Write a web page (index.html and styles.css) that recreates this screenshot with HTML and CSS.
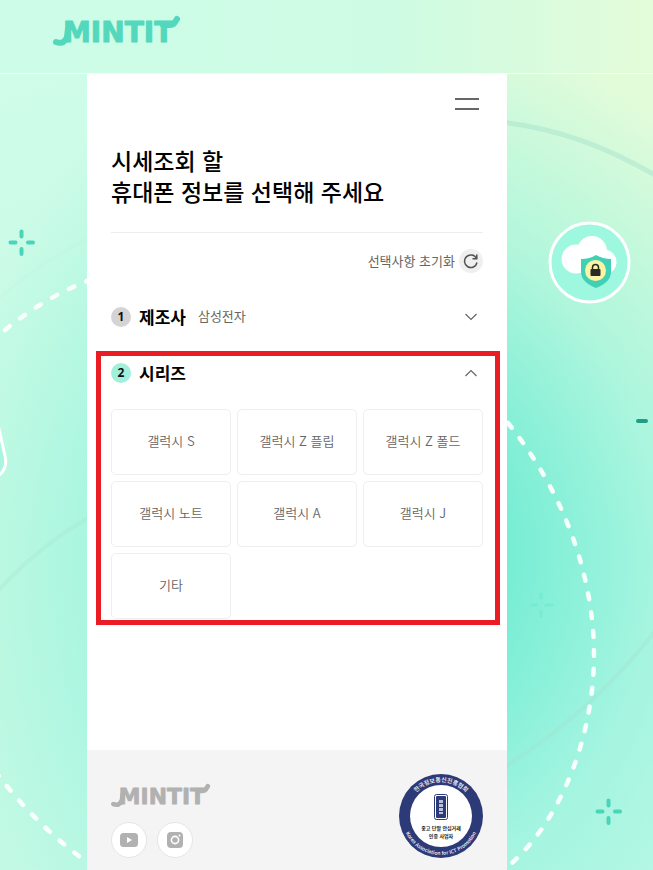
FILE: index.html
```html
<!DOCTYPE html>
<html lang="ko">
<head>
<meta charset="utf-8">
<meta name="viewport" content="width=device-width, initial-scale=1">
<title>MINTIT</title>
<link rel="stylesheet" href="styles.css">
</head>
<body>
<svg class="backdrop" viewBox="0 0 653 870" preserveAspectRatio="xMidYMid slice" aria-hidden="true">
  <g fill="none" stroke="#a5dfc9">
    <path d="M500 122Q580 130 660 178" stroke-width="5" opacity=".45"/>
    <path d="M500 770Q592 713 656 630" stroke-width="4" opacity=".3"/>
    <path d="M0 298Q40 262 90 238" stroke-width="3" opacity=".06"/>
    <path d="M-2 591Q40 545 90 517" stroke-width="4" opacity=".25"/>
  </g>
  <g fill="none" stroke="#fff" stroke-width="4.5" stroke-linecap="round" stroke-dasharray="6 13" opacity=".92">
    <path d="M508 423C570 500 594 585 594 655C594 730 565 815 512 863"/>
    <path d="M5 330Q45 297 92 279"/>
    <path d="M-5 771Q34 823 84 860"/>
  </g>
  <path d="M-3 420L5 456Q8 469 -2 476" fill="#a9f6e0" stroke="#fff" stroke-width="3"/>
  <g fill="none" stroke="#4ad4b8" stroke-width="4" stroke-linecap="round">
    <path d="M10.500 242.500h5M28 242.500h5M21.500 231.500v5M21.500 249v5"/>
    <path d="M597.500 811.500h5M615 811.500h5M608.500 800.500v5M608.500 818v5"/>
    <path d="M532 605h4M546 605h6M541 594v4M541 611v5" stroke="#5ce6cb" stroke-width="3" opacity=".35"/>
    <path d="M638 421h8" stroke="#219d86"/>
  </g>
  <circle cx="589.500" cy="262.500" r="39.500" fill="#9ef8df" stroke="#fff" stroke-width="3"/>
  <g fill="#fff"><circle cx="576" cy="259" r="14.500"/><circle cx="592" cy="251" r="15"/><circle cx="604" cy="262" r="12.500"/><path d="M576 255h29v18h-29z"/></g>
  <path d="M596 255q7 4 15 4v13q0 10-15 16q-15-6-15-16v-13q9 0 15-4z" fill="#42d0b4"/>
  <circle cx="595.500" cy="270.500" r="10.500" fill="#fbf3a6"/>
  <rect x="590.500" y="269" width="10" height="7" rx="1" fill="#292b25"/>
  <path d="M592.500 269v-1.500a3 3 0 0 1 6 0v1.500" fill="none" stroke="#292b25" stroke-width="1.500"/>
</svg>

<header class="site-header">
  <a class="brand" href="#" aria-label="MINTIT"><svg viewBox="0 0 128 32">
    <text class="wordmark-text" x="10" y="27">MINTIT</text>
    <path class="swash" d="M3 27Q11 30 14 22L15 14M110 10H116Q121 10 122 7L124 4"/>
  </svg></a>
</header>

<div class="panel">
  <main class="content">
    <div class="menu-row">
      <button class="menu" type="button" aria-label="메뉴"><span></span><span></span></button>
    </div>
    <h1>시세조회 할<br>휴대폰 정보를 선택해 주세요</h1>
    <div class="reset-row">
      <button class="reset" type="button">선택사항 초기화
        <span class="reset-icon"><svg viewBox="0 0 24 24" fill="none" stroke="#505050" stroke-width="1.500"><path d="M17.500 9.500A6.300 6.300 0 1 0 18 13.500M17.800 5.500v4.300h-4.300"/></svg></span>
      </button>
    </div>
    <section>
      <button class="step step-maker" type="button" aria-expanded="false">
        <span class="number">1</span><span class="step-title">제조사</span><span class="step-value">삼성전자</span>
        <svg class="chevron" viewBox="0 0 12 8"><path d="M.5 1L6 6.500L11.500 1"/></svg>
      </button>
    </section>
    <section class="series">
      <button class="step step-series" type="button" aria-expanded="true">
        <span class="number current">2</span><span class="step-title">시리즈</span>
        <svg class="chevron" viewBox="0 0 12 8"><path d="M.5 7L6 1.500L11.500 7"/></svg>
      </button>
      <div class="options">
        <button type="button">갤럭시 S</button>
        <button type="button">갤럭시 Z 플립</button>
        <button type="button">갤럭시 Z 폴드</button>
        <button type="button">갤럭시 노트</button>
        <button type="button">갤럭시 A</button>
        <button type="button">갤럭시 J</button>
        <button type="button">기타</button>
      </div>
    </section>
  </main>

  <footer class="site-footer">
    <div>
      <a class="footer-brand" href="#" aria-label="MINTIT"><svg viewBox="0 0 128 32">
        <text class="wordmark-text" x="10" y="27">MINTIT</text>
        <path class="swash" d="M3 27Q11 30 14 22L15 14M110 10H116Q121 10 122 7L124 4"/>
      </svg></a>
      <div class="social">
        <a href="#" aria-label="YouTube"><svg viewBox="0 0 18 18"><rect y="2" width="18" height="14" rx="3.500" fill="#b1b1b1"/><path d="M7 6l5 3l-5 3z" fill="#fff"/></svg></a>
        <a href="#" aria-label="Instagram"><svg viewBox="0 0 18 18"><rect x="1" y="1" width="16" height="16" rx="4" fill="#b1b1b1"/><circle cx="9" cy="9" r="3.600" fill="none" stroke="#fff" stroke-width="1.600"/><circle cx="13.500" cy="4.500" r="1" fill="#fff"/></svg></a>
      </div>
    </div>
    <svg class="badge" viewBox="0 0 84 84" role="img" aria-label="중고 단말 안심거래 인증 사업자">
      <defs><path id="arc-top" d="M8 42a34 34 0 0 1 68 0"/><path id="arc-bottom" d="M3 42a39 39 0 0 0 78 0"/></defs>
      <circle cx="42" cy="42" r="42" fill="#2d3a78"/><circle cx="42" cy="42" r="31" fill="#fff"/>
      <text class="badge-ring"><textPath href="#arc-top" startOffset="50%">한국정보통신진흥협회</textPath></text>
      <text class="badge-ring badge-latin"><textPath href="#arc-bottom" startOffset="50%">Korea Association for ICT Promotion</textPath></text>
      <rect x="35.500" y="20.500" width="13" height="25" rx="2" fill="#fff" stroke="#2d3a78"/>
      <rect x="37" y="22" width="10" height="22" rx="1" fill="#2d3a78"/>
      <path d="M42 26v14" stroke="#b9c0dc" stroke-width="4" stroke-dasharray="3 1"/>
      <text class="badge-label" x="42" y="56">중고 단말 안심거래</text>
      <text class="badge-label" x="42" y="64">인증 사업자</text>
    </svg>
  </footer>
</div>
</body>
</html>
```
FILE: styles.css
```css
* { box-sizing: border-box; }

body {
  margin: 0;
  min-height: 100vh;
  display: flex;
  flex-direction: column;
  position: relative;
  font-family: "Noto Sans CJK KR", "Noto Sans", sans-serif;
  color: #111;
  background:
    radial-gradient(ellipse 68% 62% at 58% 63%, #5ce9cb 0%, rgba(100, 234, 208, .85) 25%, rgba(130, 240, 218, .45) 62%, rgba(160, 245, 225, 0) 100%),
    radial-gradient(circle at 100% 0%, #e6fcd6 0%, rgba(215, 252, 222, 0) 50%),
    linear-gradient(160deg, #d0fdea 0%, #c6fae3 50%, #bdf8e6 100%);
}

button { font: inherit; color: inherit; background: none; border: 0; padding: 0; }
a { color: inherit; text-decoration: none; }
svg { display: block; }

.backdrop { position: absolute; inset: 0; width: 100%; height: 100%; z-index: -1; }

.brand svg, .footer-brand svg { overflow: visible; }
.wordmark-text {
  font: bold 28px "DejaVu Sans", sans-serif;
  fill: currentColor;
  stroke: currentColor;
  stroke-width: 1px;
  stroke-linejoin: round;
}
.swash { fill: none; stroke: currentColor; stroke-width: 6px; stroke-linecap: round; }

.site-header {
  height: 74px;
  padding: 15px 53px;
  background: linear-gradient(90deg, #cdfde9, #cefbe3 60%, #e3fcd9);
  border-bottom: 1px solid #f2fff8;
}
.brand { display: inline-block; color: #53d8bd; }
.brand svg { width: 128px; height: 32px; }

.panel {
  flex: 1;
  display: flex;
  flex-direction: column;
  margin: 0 146px 0 87px;
  background: #fff;
}
.content { flex: 1; padding: 18px 24px 125px; }

.menu-row { display: flex; justify-content: flex-end; padding-right: 4px; }
.menu {
  width: 24px;
  height: 24px;
  display: flex;
  flex-direction: column;
  justify-content: center;
  gap: 8px;
}
.menu span { width: 100%; height: 2px; background: #666; }

h1 {
  margin: 29px 0 0;
  padding-bottom: 25px;
  border-bottom: 1px solid #ededed;
  font-size: 23px;
  font-weight: 500;
  line-height: 31px;
  color: #000;
}

.reset-row { display: flex; justify-content: flex-end; margin: 16px 0; }
.reset { display: flex; align-items: center; gap: 4px; font-size: 13px; line-height: 24px; color: #666; }
.reset-icon { width: 24px; height: 24px; border-radius: 50%; background: #efefef; }

.step { display: flex; align-items: center; width: 100%; text-align: left; }
.step-maker { height: 56px; }
.step-series { height: 34px; }
.number {
  width: 20px;
  height: 20px;
  margin-right: 8px;
  border-radius: 50%;
  background: #d4d4d4;
  font-family: "Open Sans", sans-serif;
  font-size: 12px;
  font-weight: 700;
  line-height: 20px;
  text-align: center;
}
.number.current { background: #a0f0dc; }
.step-title { font-size: 17px; font-weight: 700; line-height: 24px; color: #000; }
.step-value { margin-left: 12px; padding-bottom: 2px; font-size: 13px; line-height: 24px; color: #666; }
.chevron {
  width: 12px;
  height: 8px;
  margin: 0 6px 0 auto;
  fill: none;
  stroke: #666;
  stroke-width: 1.2px;
}

.series {
  margin: 6px -17px 0 -15px;
  padding: 0 12px 1px 10px;
  border: 5px solid #ea1d25;
}
.options {
  display: grid;
  grid-template-columns: repeat(3, 1fr);
  grid-auto-rows: 66px;
  gap: 6px;
  margin-top: 19px;
}
.options button {
  padding-bottom: 4px;
  border: 1px solid #eee;
  border-radius: 5px;
  font-size: 13px;
  font-weight: 350;
  color: #666;
}

.site-footer {
  display: flex;
  justify-content: space-between;
  padding: 24px 24px 12px;
  background: #f4f4f4;
}
.footer-brand { display: block; margin-top: 9px; color: #b1b1b1; }
.footer-brand svg { width: 100px; height: 25px; }
.social { display: flex; gap: 10px; margin-top: 14px; }
.social a {
  width: 36px;
  height: 36px;
  display: grid;
  place-items: center;
  background: #fff;
  border: 1px solid #e5e5e5;
  border-radius: 50%;
}
.social svg { width: 18px; height: 18px; }
.badge { width: 84px; height: 84px; }
.badge-ring { fill: #fff; font-size: 6px; font-weight: 500; text-anchor: middle; }
.badge-latin { font-size: 5px; }
.badge-label { fill: #222; font-size: 5px; font-weight: 700; text-anchor: middle; }
```
